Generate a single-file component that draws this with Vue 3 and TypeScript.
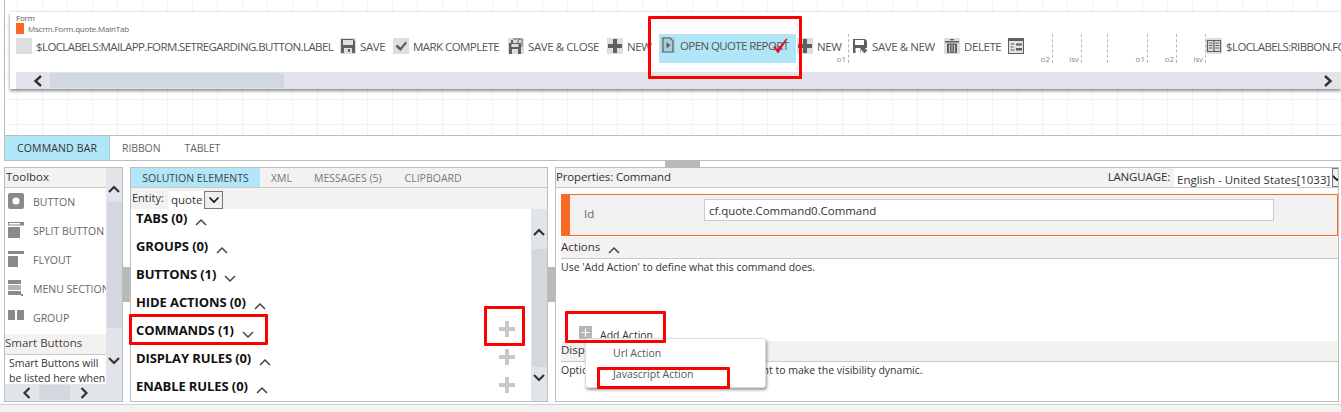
<script setup lang="ts">
interface ToolItem { icon: string; label: string; left: number }
const tools: ToolItem[] = [
  { icon: 'blank', label: '$LOCLABELS:MAILAPP.FORM.SETREGARDING.BUTTON.LABEL', left: 16 },
  { icon: 'save', label: 'SAVE', left: 340 },
  { icon: 'check', label: 'MARK COMPLETE', left: 393 },
  { icon: 'saveclose', label: 'SAVE & CLOSE', left: 508 },
  { icon: 'plus', label: 'NEW', left: 607 },
]
const leftItems = [
  { label: 'BUTTON', icon: 'button' },
  { label: 'SPLIT BUTTON', icon: 'split' },
  { label: 'FLYOUT', icon: 'flyout' },
  { label: 'MENU SECTION', icon: 'menu' },
  { label: 'GROUP', icon: 'group' },
]
const sections = [
  { label: 'TABS (0)', open: false, plus: false },
  { label: 'GROUPS (0)', open: false, plus: false },
  { label: 'BUTTONS (1)', open: true, plus: false },
  { label: 'HIDE ACTIONS (0)', open: false, plus: false },
  { label: 'COMMANDS (1)', open: true, plus: true },
  { label: 'DISPLAY RULES (0)', open: false, plus: true },
  { label: 'ENABLE RULES (0)', open: false, plus: true },
]
const seps = [
  { w: 29, tag: 'o2' }, { w: 29, tag: 'isv' }, { w: 26, tag: '' },
  { w: 40, tag: 'o1' }, { w: 29, tag: 'o2' }, { w: 29, tag: 'isv' },
]
</script>

<template>
  <div class="page">
    <section class="canvas">
      <div class="card">
        <div class="card-head">
          <div class="form-title">Form</div>
          <div class="tab-title"><span class="swatch"></span>Mscrm.Form.quote.MainTab</div>
        </div>
        <div class="toolbar">
          <div v-for="t in tools" :key="t.left" class="tool" :class="'t' + t.left">
            <svg class="ico" viewBox="0 0 16 16">
              <rect width="16" height="16" fill="#dedede" />
              <template v-if="t.icon === 'save'">
                <path d="M1 1h12l2 2v12H1z" fill="#5f5f5f" />
                <rect x="3" y="2" width="10" height="5" fill="#dedede" />
                <rect x="4" y="10" width="8" height="5" fill="#dedede" />
                <rect x="8" y="11" width="2" height="3" fill="#5f5f5f" />
              </template>
              <path v-else-if="t.icon === 'check'" d="M2.5 8.5l2-2 3 3 5-6 1.500 1.500-6.500 8z" fill="#5f5f5f" />
              <template v-else-if="t.icon === 'saveclose'">
                <path d="M1 5h2V2h2v3h8v11H1z" fill="#5f5f5f" />
                <rect x="3.5" y="6" width="7" height="3" fill="#dedede" />
                <rect x="4" y="11" width="6" height="5" fill="#dedede" />
                <path d="M5 1h9v8M9 4l3-3M11 5H9" fill="none" stroke="#5f5f5f" stroke-width="1" />
              </template>
              <path v-else-if="t.icon === 'plus'" d="M6 1h4v5h5v4h-5v5H6v-5H1V6h5z" fill="#5f5f5f" />
            </svg>
            <span>{{ t.label }}</span>
          </div>

          <div class="tool report">
            <svg class="ico small" viewBox="0 0 14 16">
              <rect width="14" height="16" fill="#a8cfdc" />
              <path d="M2 1h7l3 3v11H2z" fill="none" stroke="#5f5f5f" stroke-width="1.200" />
              <path d="M5.500 5l4 3.200-4 3.200z" fill="#5f5f5f" />
            </svg>
            <span>OPEN QUOTE REPORT</span>
          </div>

          <div class="tool t797">
            <svg class="ico" viewBox="0 0 16 16">
              <rect width="16" height="16" fill="#dedede" />
              <path d="M6 1h4v5h5v4h-5v5H6v-5H1V6h5z" fill="#5f5f5f" />
            </svg>
            <span>NEW</span>
          </div>
          <div class="sep first"><i>o1</i></div>

          <div class="tool t852">
            <svg class="ico" viewBox="0 0 16 16">
              <path d="M1 1h12l2 2v7h-3v2H9v3H1z" fill="#5f5f5f" />
              <rect x="3" y="2" width="9" height="5" fill="#fff" />
              <rect x="3.500" y="10" width="5" height="5" fill="#fff" />
              <path d="M12.500 10v5M10 12.500h5" stroke="#5f5f5f" stroke-width="1.800" />
            </svg>
            <span>SAVE &amp; NEW</span>
          </div>
          <div class="tool t944">
            <svg class="ico" viewBox="0 0 16 16">
              <rect width="16" height="16" fill="#dedede" />
              <path d="M1 3h14v1.500H1zM6 1h4v1.200H6z" fill="#5f5f5f" />
              <path d="M3 5.500h10V15H3z" fill="#5f5f5f" />
              <path d="M5.500 6.500v8M8 6.500v8M10.500 6.500v8" stroke="#dedede" stroke-width="0.900" />
            </svg>
            <span>DELETE</span>
          </div>
          <div class="tool t1008">
            <svg class="ico" viewBox="0 0 16 16">
              <rect width="16" height="16" fill="#5f5f5f" />
              <rect x="1" y="3" width="14" height="12" fill="#e4e4e4" />
              <path d="M2.500 6h4M2.500 9h3M2.500 12h4" stroke="#5f5f5f" stroke-width="1" />
              <path d="M8 5.500h6v2H8zM8 10h6v2.500H8z" fill="#5f5f5f" />
            </svg>
          </div>
          <div v-for="(s, i) in seps" :key="i" class="sep" :class="'w' + s.w"><i>{{ s.tag }}</i></div>
          <div class="tool last">
            <svg class="ico" viewBox="0 0 16 16">
              <rect width="16" height="16" fill="#dedede" />
              <path d="M1.500 2.500h13v11h-13zM8 2.500v11" fill="none" stroke="#5f5f5f" stroke-width="1.200" />
              <path d="M3 5h3.500M3 7.500h3.500M3 10h3.500M9.500 5H13M9.500 7.500H13M9.500 10H13" stroke="#5f5f5f" stroke-width="1" />
            </svg>
            <span>$LOCLABELS:RIBBON.FORM</span>
          </div>
        </div>
        <div class="hscroll">
          <svg class="chev" viewBox="0 0 12 12"><path d="M9 1L3.500 6 9 11" fill="none" stroke="#333" stroke-width="2.400" /></svg>
          <div class="thumb"></div>
          <div class="spacer"></div>
          <svg class="chev-r" viewBox="0 0 12 12"><path d="M3 1l5.500 5L3 11" fill="none" stroke="#333" stroke-width="2.400" /></svg>
        </div>
      </div>
    </section>

    <nav class="tabs">
      <a class="active">COMMAND BAR</a>
      <a>RIBBON</a>
      <a>TABLET</a>
    </nav>
    <div class="handle-row"><span class="handle"></span></div>

    <div class="panels">
      <aside class="panel toolbox">
        <div class="toolbox-main">
          <div class="panel-title">Toolbox</div>
          <ul class="tool-list">
            <li v-for="l in leftItems" :key="l.label">
              <svg class="tb-ico" viewBox="0 0 16 16">
                <template v-if="l.icon === 'button'">
                  <rect width="16" height="16" rx="2" fill="#8a8a8a" />
                  <circle cx="8" cy="8" r="3.500" fill="#fff" />
                </template>
                <template v-else-if="l.icon === 'split'">
                  <rect width="16" height="3.500" fill="#8a8a8a" />
                  <rect x="1" y="1" width="11" height="1.500" fill="#fff" />
                  <rect y="5" width="12" height="11" fill="#8a8a8a" />
                </template>
                <template v-else-if="l.icon === 'flyout'">
                  <rect width="16" height="3" fill="#8a8a8a" />
                  <rect y="5" width="10" height="11" fill="#8a8a8a" />
                </template>
                <template v-else-if="l.icon === 'menu'">
                  <rect y="0" width="13" height="4" fill="#8a8a8a" />
                  <rect y="5" width="13" height="5" fill="#b3b3b3" />
                  <rect y="11" width="13" height="4" fill="#8a8a8a" />
                  <rect x="13" y="14" width="2" height="2" fill="#8a8a8a" />
                </template>
                <template v-else>
                  <rect y="1" width="7" height="10" fill="#8a8a8a" />
                  <rect x="9" y="1" width="7" height="10" fill="#8a8a8a" />
                </template>
              </svg>
              <span>{{ l.label }}</span>
            </li>
          </ul>
          <div class="smart-title">Smart Buttons</div>
          <div class="smart-body">Smart Buttons will be listed here when</div>
        </div>
        <div class="vscroll narrow">
          <svg class="vchev" viewBox="0 0 12 12"><path d="M1 9l5-5 5 5" fill="none" stroke="#333" stroke-width="2.200" /></svg>
          <div class="vthumb"></div>
          <svg class="vchev" viewBox="0 0 12 12"><path d="M1 3l5 5 5-5" fill="none" stroke="#333" stroke-width="2.200" /></svg>
        </div>
        <div class="toolbox-h">
          <svg class="chev2" viewBox="0 0 12 12"><path d="M8.500 1L3.500 6l5 5" fill="none" stroke="#333" stroke-width="2.200" /></svg>
          <div class="h-thumb"></div>
          <svg class="chev2" viewBox="0 0 12 12"><path d="M3.500 1l5 5-5 5" fill="none" stroke="#333" stroke-width="2.200" /></svg>
        </div>
      </aside>
      <div class="split"><span></span></div>

      <section class="panel solution">
        <div class="sol-tabs">
          <a class="active">SOLUTION ELEMENTS</a>
          <a class="xml">XML</a>
          <a class="msg">MESSAGES (5)</a>
          <a class="clip">CLIPBOARD</a>
        </div>
        <div class="entity">
          <label>Entity:</label>
          <div class="entity-select">quote<b class="arrow"><svg viewBox="0 0 12 8"><path d="M1.500 1.500L6 6l4.500-4.500" fill="none" stroke="#111" stroke-width="1.600" /></svg></b></div>
        </div>
        <div class="sol-body">
          <div class="sec-list">
            <div v-for="s in sections" :key="s.label" class="sec">
              <strong>{{ s.label }}</strong>
              <svg class="caret" :class="{ down: s.open }" viewBox="0 0 12 8"><path d="M1 7l5-5 5 5" fill="none" stroke="#444" stroke-width="1.500" /></svg>
              <span class="spacer"></span>
              <svg v-if="s.plus" class="add" viewBox="0 0 16 16"><path d="M6 0h4v6h6v4h-6v6H6v-6H0V6h6z" fill="#c8c8c8" /></svg>
            </div>
          </div>
          <div class="vscroll wide">
            <svg class="vchev" viewBox="0 0 12 12"><path d="M1 9l5-5 5 5" fill="none" stroke="#333" stroke-width="2.200" /></svg>
            <div class="vthumb"></div>
            <svg class="vchev" viewBox="0 0 12 12"><path d="M1 3l5 5 5-5" fill="none" stroke="#333" stroke-width="2.200" /></svg>
          </div>
        </div>
      </section>
      <div class="split"><span></span></div>

      <section class="panel props">
        <div class="props-head">
          <span>Properties: Command</span>
          <span class="spacer"></span>
          <span class="lang-label">LANGUAGE:</span>
          <div class="lang-select">English - United States[1033]<b><svg viewBox="0 0 12 8"><path d="M1.500 1.500L6 6l4.500-4.500" fill="none" stroke="#111" stroke-width="1.600" /></svg></b></div>
        </div>
        <div class="id-box">
          <span class="id-label">Id</span>
          <div class="id-input">cf.quote.Command0.Command</div>
        </div>
        <div class="band actions"><span>Actions</span>
          <svg class="caret" viewBox="0 0 12 8"><path d="M1 7l5-5 5 5" fill="none" stroke="#444" stroke-width="1.500" /></svg>
        </div>
        <p class="hint">Use 'Add Action' to define what this command does.</p>
        <div class="add-action">
          <span class="plus-box"><svg viewBox="0 0 14 14"><path d="M7 2.500v9M2.500 7h9" stroke="#fff" stroke-width="1.200" /></svg></span>
          <span>Add Action</span>
        </div>
        <div class="band display"><span>Display Rules</span></div>
        <p class="hint second">Optionally add the Display Rule component to make the visibility dynamic.</p>
        <div class="popup">
          <div>Url Action</div>
          <div>Javascript Action</div>
        </div>
      </section>
    </div>
    <footer class="foot"></footer>

    <i class="mark m-report"></i>
    <svg class="tick" viewBox="0 0 16 16"><path d="M0 9l2-1 2.500 3.500L14 0l1.500 .5L5.500 16z" fill="#ee0a2c" /></svg>
    <i class="mark m-commands"></i>
    <i class="mark m-plus"></i>
    <i class="mark m-add"></i>
    <i class="mark m-js"></i>
  </div>
</template>

<style>
html, body { margin: 0; background: #fff; }
</style>

<style scoped>
.page {
  position: relative;
  width: 1341px;
  height: 412px;
  overflow: hidden;
  font-family: "Open Sans", "Noto Sans", sans-serif;
  font-size: 11px;
  color: #444;
  background: #fff;
}
.canvas {
  box-sizing: border-box;
  height: 135px;
  padding: 12px 0 0 5px;
  margin-left: 4px;
  border-left: 1px solid #b9b9b9;
  background-color: #fff;
  background-image:
    linear-gradient(to right, #f2f2f2 1px, transparent 1px),
    linear-gradient(to bottom, #f2f2f2 1px, transparent 1px);
  background-size: 25px 25px;
  background-position: 12px -1px;
}
.card {
  height: 77px;
  background: #fff;
  box-shadow: 0 2px 3px rgba(0, 0, 0, 0.45), 0 -1px 2px rgba(0, 0, 0, 0.08);
  display: flex;
  flex-direction: column;
  overflow: hidden;
}
.card-head { height: 22px; padding: 1px 0 0 6px; box-sizing: border-box; font-size: 8px; line-height: 10px; letter-spacing: -0.2px; color: #555; }
.form-title { height: 10px; }
.tab-title { display: flex; align-items: center; gap: 4px; color: #666; }
.swatch { width: 8px; height: 11px; background: #f96a24; }
.toolbar {
  position: relative;
  height: 38px;
  flex: none;
  display: flex;
  align-items: flex-start;
  white-space: nowrap;
  padding-left: 6px;
  font-size: 11.5px;
  letter-spacing: -0.42px;
  color: #555;
}
.tool { display: flex; align-items: center; gap: 4px; height: 16px; margin-top: 4px; flex: none; }
.ico { width: 16px; height: 16px; flex: none; }
.t16 { width: 324px; letter-spacing: -0.6px; }
.t340 { width: 53px; }
.t393 { width: 115px; letter-spacing: -0.55px; }
.t508 { width: 99px; }
.t607 { width: 52px; overflow: hidden; }
.report {
  width: 137px;
  height: 29px;
  margin-top: 0;
  background: #b1e6f8;
  padding: 0 0 7px 2px;
  box-sizing: border-box;
  gap: 5px;
  margin-right: 1px;
  letter-spacing: -0.6px;
}
.ico.small { width: 14px; height: 16px; }
.t797 { width: 50px; }
.t852 { width: 92px; }
.t944 { width: 64px; }
.t1008 { width: 16px; }
.sep {
  box-sizing: border-box;
  position: relative;
  height: 29px;
  flex: none;
  border-right: 1px dashed #b8b8b8;
}
.sep i {
  position: absolute;
  right: 2px;
  bottom: -1px;
  font-style: normal;
  font-size: 8px;
  line-height: 10px;
  color: #888;
  letter-spacing: 0;
}
.sep.first { width: 1px; margin: 0 3px 0 1px; }
.w29 { width: 29px; }
.w26 { width: 26px; }
.w40 { width: 40px; }
.last { flex: none; letter-spacing: -0.6px; }
.hscroll {
  height: 17px;
  margin-left: 6px;
  background: #e1e5e9;
  display: flex;
  align-items: center;
  flex: none;
}
.chev { width: 12px; height: 12px; margin: 0 6px 0 16px; flex: none; }
.chev-r { width: 12px; height: 12px; margin-right: 7px; flex: none; }
.thumb { width: 234px; height: 15px; background: #d3d8df; flex: none; }
.tabs {
  box-sizing: border-box;
  height: 26px;
  margin-left: 4px;
  border-top: 1px solid #bdbdbd;
  border-left: 1px solid #bdbdbd;
  border-bottom: 1px solid #bdbdbd;
  display: flex;
  font-size: 10.5px;
  line-height: 25px;
  letter-spacing: -0.1px;
}
.tabs a { padding: 0 12px; color: #666; }
.tabs a.active { width: 80px; background: #b1e6f8; color: #333; padding: 0 12px; border-right: 1px solid #a7d3e4; letter-spacing: 0.15px; white-space: nowrap; }
.handle-row { height: 6px; position: relative; }
.handle { position: absolute; left: 665px; top: -1px; width: 35px; height: 7px; background: #b9b9b9; }
.panels { display: flex; height: 235px; margin-left: 4px; }
.panel { box-sizing: border-box; border: 1px solid #bdbdbd; position: relative; background: #fff; flex: none; }
.split { width: 7px; position: relative; flex: none; }
.split span { position: absolute; left: 0; top: 100px; width: 7px; height: 35px; background: #b9b9b9; }
.toolbox { width: 119px; display: grid; grid-template-columns: 101px 16px; grid-template-rows: 216px 17px; }
.toolbox-main { overflow: hidden; }
.panel-title { height: 20px; line-height: 18px; padding-left: 1px; font-size: 11.5px; color: #333; background: #f3f2f1; border-bottom: 1px solid #c8c8c8; box-sizing: border-box; }
.tool-list { list-style: none; margin: 0; padding: 5px 0 0 0; height: 146px; box-sizing: border-box; }
.tool-list li { height: 29px; display: flex; align-items: flex-start; padding-left: 3px; gap: 9px; white-space: nowrap; font-size: 10.5px; color: #666; line-height: 18px; }
.tb-ico { width: 16px; height: 16px; flex: none; }
.smart-title { height: 21px; line-height: 18px; padding-left: 0; font-size: 11.5px; background: #f3f2f1; border-bottom: 1px solid #c8c8c8; box-sizing: border-box; color: #444; }
.smart-body { padding: 1px 0 0 4px; font-size: 10.5px; line-height: 15px; color: #333; width: 98px; }
.vscroll { background: #e1e5e9; display: flex; flex-direction: column; align-items: center; box-sizing: border-box; }
.narrow { grid-row: 1 / 2; grid-column: 2; padding-top: 15px; }
.narrow .vthumb { margin-top: 7px; height: 126px; }
.narrow .vchev:last-child { margin-top: 27px; }
.vchev { width: 12px; height: 12px; flex: none; }
.vthumb { width: 15px; flex: none; background: #d3d8df; }
.toolbox-h { grid-column: 1 / 3; background: #e1e5e9; display: flex; align-items: center; padding-left: 16px; }
.chev2 { width: 12px; height: 12px; flex: none; }
.h-thumb { width: 31px; height: 15px; margin: 0 8px 0 6px; background: #d3d8df; }
.solution { width: 418px; display: flex; flex-direction: column; }
.sol-tabs { height: 20px; flex: none; background: #f3f2f1; border-bottom: 1px solid #c8c8c8; box-sizing: border-box; display: flex; font-size: 10.5px; line-height: 20px; color: #777; }
.sol-tabs a.active { width: 129px; background: #b1e6f8; color: #444; text-align: center; }
.sol-tabs .xml { margin-left: 11px; }
.sol-tabs .msg { margin-left: 22px; }
.sol-tabs .clip { margin-left: 23px; }
.entity { height: 21px; flex: none; background: #f3f2f1; display: flex; align-items: flex-start; padding-left: 1px; font-size: 11px; color: #333; }
.entity label { line-height: 20px; width: 36px; flex: none; }
.entity-select { margin-top: 3px; width: 55px; height: 18px; background: #fff; box-sizing: border-box; display: flex; align-items: center; padding-left: 3px; position: relative; font-size: 11.5px; line-height: 18px; color: #333; }
.arrow { position: absolute; right: 0; top: 0; width: 19px; height: 18px; box-sizing: border-box; border: 1px solid #777; background: #efefef; display: flex; align-items: center; justify-content: center; }
.arrow svg { width: 12px; height: 8px; }
.sol-body { flex: 1; display: flex; min-height: 0; }
.sec-list { flex: 1; padding: 1px 0 0 5px; overflow: hidden; }
.sec { height: 28px; display: flex; align-items: flex-start; color: #111; font-size: 13px; line-height: 17px; white-space: nowrap; }
.sec strong { font-weight: 700; letter-spacing: -0.1px; }
.caret { width: 12px; height: 8px; margin: 8px 0 0 8px; flex: none; }
.caret.down { transform: rotate(180deg); margin-top: 9px; }
.spacer { flex: 1; }
.add { width: 16px; height: 16px; margin: -1px 16px 0 0; flex: none; }
.wide { width: 16px; flex: none; padding-top: 17px; }
.wide .vthumb { margin-top: 11px; height: 118px; }
.wide .vchev:last-child { margin-top: 5px; }
.props { width: 784px; }
.props-head { height: 20px; display: flex; align-items: flex-start; background: #f3f2f1; border-bottom: 1px solid #c8c8c8; box-sizing: border-box; font-size: 11.5px; line-height: 18px; letter-spacing: -0.15px; color: #333; white-space: nowrap; }
.lang-label { margin-right: 4px; }
.lang-select { width: 164px; height: 19px; background: #fff; box-sizing: border-box; padding-left: 3px; line-height: 23px; position: relative; overflow: hidden; flex: none; color: #333; letter-spacing: 0; }
.lang-select b { position: absolute; right: 0; top: 0; width: 6px; height: 19px; box-sizing: border-box; background: #eee; border: 1px solid #777; border-right: 0; overflow: hidden; }
.lang-select svg { display: block; width: 12px; height: 8px; margin: 5px 0 0 -2px; }
.id-box {
  box-sizing: border-box;
  margin: 6px 0 0 5px;
  height: 42px;
  background: #f1f1f1;
  border: 1px solid #f96a24;
  border-left: 9px solid #f96a24;
  display: flex;
  align-items: flex-start;
}
.id-label { width: 134px; padding: 10px 0 0 14px; box-sizing: border-box; font-size: 11.5px; line-height: 17px; color: #666; }
.id-input { width: 570px; height: 22px; margin-top: 4px; border: 1px solid #ccc; background: #fff; box-sizing: border-box; line-height: 22px; padding-left: 4px; font-size: 11.5px; letter-spacing: -0.05px; color: #333; }
.band { margin: 1px 0 0 5px; height: 22px; background: #f3f2f1; border-bottom: 1px solid #c8c8c8; box-sizing: border-box; display: flex; align-items: flex-start; font-size: 11.5px; line-height: 20px; color: #333; }
.band .caret { margin-top: 9px; }
.hint { margin: 0 0 0 5px; font-size: 10.5px; line-height: 16px; color: #333; white-space: nowrap; }
.add-action { height: 26px; margin: 40px 0 0 23px; display: flex; align-items: flex-start; gap: 8px; padding-top: 11px; box-sizing: border-box; font-size: 10.5px; line-height: 18px; color: #333; overflow: visible; }
.plus-box { width: 13px; height: 13px; background: #b5b5b5; display: block; flex: none; }
.plus-box svg { display: block; width: 13px; height: 13px; }
.band.display { margin-top: 0; height: 21px; line-height: 18px; }
.hint.second { margin-top: 0; }
.popup {
  position: absolute;
  left: 29px;
  top: 170px;
  width: 181px;
  height: 50px;
  box-sizing: border-box;
  background: #fff;
  border: 1px solid #ddd;
  border-radius: 3px;
  box-shadow: 1px 2px 3px rgba(0, 0, 0, 0.4);
  padding: 4px 0 0 27px;
  font-size: 10.5px;
  line-height: 21px;
  color: #555;
}
.foot { height: 8px; margin-top: 2px; background: #f3f3f3; border-top: 1px solid #d0d0d0; }
.mark { position: absolute; box-sizing: border-box; border: 3px solid #f00; border-radius: 1px; display: block; }
.m-report { left: 648px; top: 16px; width: 154px; height: 63px; }
.tick { position: absolute; left: 773px; top: 38px; width: 15px; height: 16px; }
.m-commands { left: 129px; top: 314px; width: 139px; height: 31px; }
.m-plus { left: 484px; top: 306px; width: 41px; height: 40px; }
.m-add { left: 565px; top: 311px; width: 101px; height: 32px; }
.m-js { left: 597px; top: 367px; width: 133px; height: 22px; }
</style>
